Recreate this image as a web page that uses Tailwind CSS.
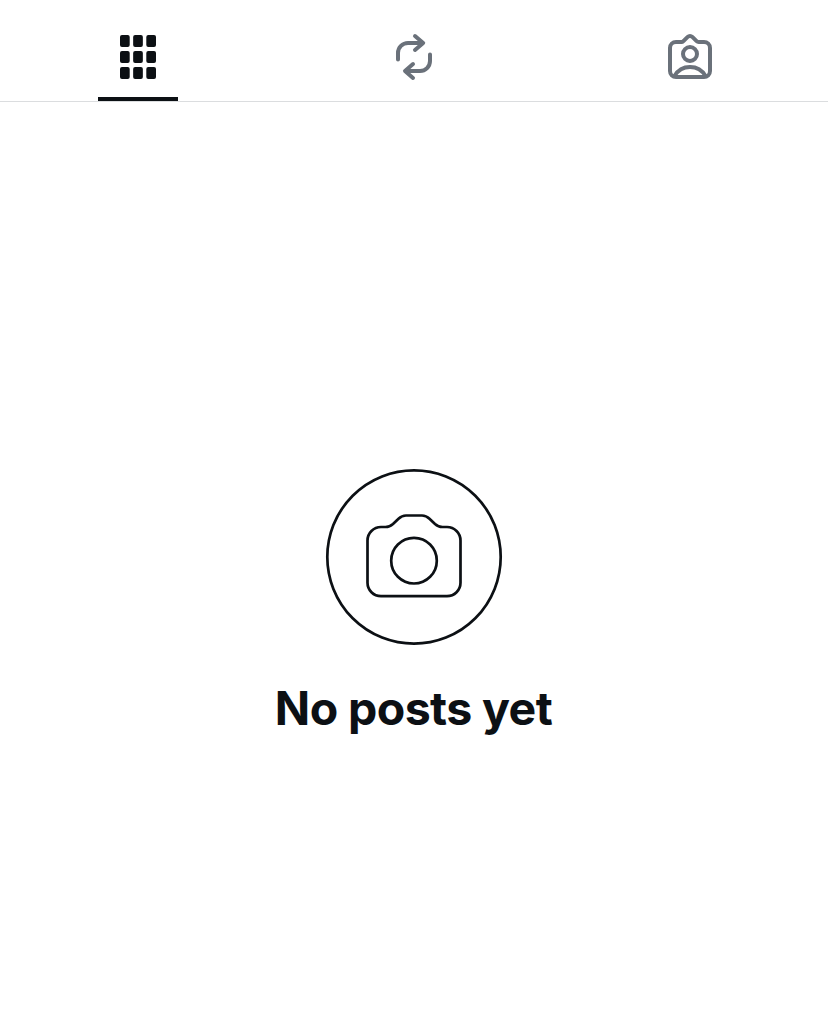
<!DOCTYPE html>
<html lang="en">
<head>
<meta charset="utf-8">
<meta name="viewport" content="width=device-width, initial-scale=1">
<title>Posts</title>
<script src="https://cdn.jsdelivr.net/npm/@tailwindcss/browser@4"></script>
</head>
<body class="flex h-[1013px] flex-col overflow-hidden bg-white font-['Inter',sans-serif] text-[#0c1014]">
<nav class="grid h-[102px] shrink-0 grid-cols-3 border-b border-[#dbdddf]">
  <button aria-label="Posts" class="flex h-[101px] flex-col items-center justify-between pt-[33px]">
    <svg class="h-12 w-12" viewBox="0 0 48 48" fill="#0c1014">
      <rect x="6" y="2" width="9.7" height="12" rx="2"/><rect x="19.15" y="2" width="9.7" height="12" rx="2"/><rect x="32.3" y="2" width="9.7" height="12" rx="2"/>
      <rect x="6" y="18" width="9.7" height="12" rx="2"/><rect x="19.15" y="18" width="9.7" height="12" rx="2"/><rect x="32.3" y="18" width="9.7" height="12" rx="2"/>
      <rect x="6" y="34" width="9.7" height="12" rx="2"/><rect x="19.15" y="34" width="9.7" height="12" rx="2"/><rect x="32.3" y="34" width="9.7" height="12" rx="2"/>
    </svg>
    <span class="h-1 w-20 bg-[#0c1014]"></span>
  </button>
  <button aria-label="Reposts" class="flex justify-center pt-[33px]">
    <svg class="h-12 w-12" viewBox="0 0 48 48" fill="none" stroke="#6a717a" stroke-width="4" stroke-linecap="round" stroke-linejoin="round">
      <path d="M8 26.500V20a10 10 0 0 1 10-10h15M25 3l8.200 7-8.200 7"/>
      <path d="M40 21.500V28a10 10 0 0 1-10 10H16M23 31l-8 7 8 7"/>
    </svg>
  </button>
  <button aria-label="Tagged" class="flex justify-center pt-[33px]">
    <svg class="h-12 w-12" viewBox="0 0 48 48" fill="none" stroke="#6a717a" stroke-width="4" stroke-linecap="round" stroke-linejoin="round">
      <path d="M10 9h5.200a3 3 0 0 0 2.200-.9l4.300-4.200a3.300 3.300 0 0 1 4.600 0l4.300 4.200a3 3 0 0 0 2.200.9H38a6 6 0 0 1 6 6v23a6 6 0 0 1-6 6H10a6 6 0 0 1-6-6V15a6 6 0 0 1 6-6Z"/>
      <circle cx="24" cy="21" r="7"/>
      <path d="M8.500 43C12 37 17 34 24 34s12 3 15.500 9"/>
    </svg>
  </button>
</nav>
<main class="flex flex-1 flex-col items-center pt-[366px]">
  <svg class="h-[178px] w-[178px]" viewBox="325 468 178 178" fill="none" stroke="#0c1014" stroke-width="2.7" stroke-linejoin="round">
    <circle cx="414" cy="557" r="86.700"/>
    <path d="M381 527h4.500c3.500 0 5.500-1.200 7.500-3l5.500-5.300c2.300-2.200 4.500-3.200 7.500-3.200h16c3 0 5.200 1 7.500 3.200l5.500 5.300c2 1.800 4 3 7.500 3h4.500a13.500 13.500 0 0 1 13.500 13.500v42.200a13.500 13.500 0 0 1-13.500 13.500h-66a13.500 13.500 0 0 1-13.500-13.500v-42.200a13.500 13.500 0 0 1 13.500-13.500Z"/>
    <circle cx="414" cy="560.700" r="22.800"/>
  </svg>
  <h1 class="mt-[34px] mr-px whitespace-nowrap text-[46.500px] leading-[57px] font-bold tracking-[-0.6px]">No posts yet</h1>
</main>
</body>
</html>
